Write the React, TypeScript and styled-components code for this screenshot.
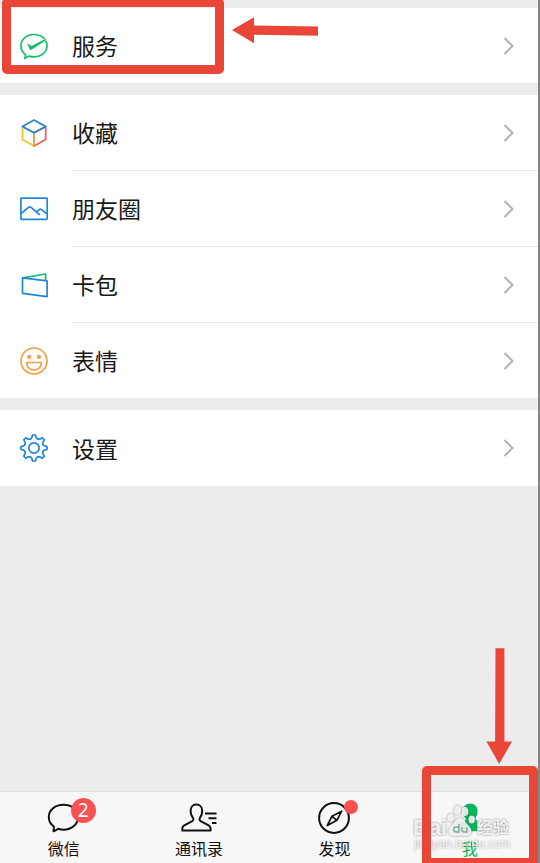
import React from "react";
import styled, { createGlobalStyle } from "styled-components";

const GlobalStyle = createGlobalStyle`
  * { box-sizing: border-box; }
  body {
    margin: 0;
    background: #ececec;
    font-family: "Noto Sans CJK SC", "Noto Sans", sans-serif;
    color: #191919;
  }
`;

const RED = "#ea4638";

const Screen = styled.div`
  position: relative;
  display: flex;
  flex-direction: column;
  width: 540px;
  height: 863px;
  padding-top: 8px;
  overflow: hidden;
  background: #ececec;
  border-right: 2px solid #858585;
`;

const Groups = styled.main`
  flex: 1;
  display: flex;
  flex-direction: column;
  gap: 12px;
`;

const Group = styled.section`
  background: #fff;
`;

const Row = styled.div<{ $height: number }>`
  display: flex;
  align-items: stretch;
  height: ${(p) => p.$height}px;
`;

const RowIcon = styled.div`
  flex: none;
  display: flex;
  align-items: center;
  width: 72px;
  padding-left: 19px;
`;

const RowBody = styled.div<{ $divider?: boolean }>`
  flex: 1;
  display: flex;
  align-items: center;
  justify-content: space-between;
  padding-right: 22px;
  border-bottom: ${(p) => (p.$divider ? "1px solid #e9e9e9" : "0")};
`;

const RowLabel = styled.span`
  font-size: 23px;
  line-height: 34px;
  padding-bottom: 1px;
`;

const TabBar = styled.nav`
  flex: none;
  display: grid;
  grid-template-columns: repeat(4, 135.4px);
  height: 72px;
  padding-top: 9px;
  background: #f7f7f7;
  border-top: 1px solid #dedede;
`;

const Tab = styled.div<{ $active?: boolean }>`
  display: flex;
  flex-direction: column;
  align-items: center;
  margin-left: -8px;
  color: ${(p) => (p.$active ? "#07b75b" : "#111")};
`;

const TabIcon = styled.div`
  position: relative;
  width: 38px;
  height: 34px;
`;

const TabLabel = styled.span`
  font-size: 16px;
  line-height: 24px;
  margin-top: 1px;
`;

const CountBadge = styled.span`
  position: absolute;
  left: 26px;
  top: -3px;
  width: 25px;
  height: 25px;
  border-radius: 50%;
  background: #fa5151;
  color: #fff;
  font: 19px/25px "Noto Sans", sans-serif;
  text-align: center;
`;

const DotBadge = styled.span`
  position: absolute;
  left: 29px;
  top: -1px;
  width: 14px;
  height: 14px;
  border-radius: 50%;
  background: #fa5151;
`;

const Highlight = styled.div<{ $x: number; $y: number; $w: number; $h: number }>`
  position: absolute;
  left: ${(p) => p.$x}px;
  top: ${(p) => p.$y}px;
  width: ${(p) => p.$w}px;
  height: ${(p) => p.$h}px;
  border: 9px solid ${RED};
  border-radius: 5px;
`;

const Arrow = styled.svg<{ $x: number; $y: number }>`
  position: absolute;
  left: ${(p) => p.$x}px;
  top: ${(p) => p.$y}px;
  fill: ${RED};
`;

const Watermark = styled.div`
  position: absolute;
  left: 413px;
  top: 800px;
  width: 112px;
  height: 56px;
  color: rgba(255, 255, 255, 0.85);
  filter: drop-shadow(0 0 1px rgba(70, 70, 70, 0.75));
`;

const MarkText = styled.span<{ $x: number; $y: number; $size: number; $bold?: boolean; $cjk?: boolean; $faint?: boolean }>`
  position: absolute;
  left: ${(p) => p.$x}px;
  top: ${(p) => p.$y}px;
  font-family: ${(p) => (p.$cjk ? '"Noto Sans CJK SC"' : '"Liberation Sans"')}, sans-serif;
  font-size: ${(p) => p.$size}px;
  font-weight: ${(p) => (p.$bold ? 700 : 400)};
  line-height: 1;
  white-space: nowrap;
  opacity: ${(p) => (p.$faint ? 0.7 : 1)};
`;

const Paw = styled.svg`
  position: absolute;
  left: 32px;
  top: 2px;
`;

const Chevron = () => (
  <svg width="14" height="20" viewBox="0 0 14 20" fill="none" stroke="#b2b2b2" strokeWidth="2">
    <path d="M2.500 2 10.500 10l-8 8" />
  </svg>
);

const lineIcon = { width: 30, height: 30, viewBox: "0 0 30 30", fill: "none", strokeWidth: 1.7 } as const;

const ServiceIcon = () => (
  <svg {...lineIcon} stroke="#16bf69">
    <path d="M25.600 7.800C23.300 5.200 19.500 3.500 15 3.500 7.600 3.500 1.900 8.500 1.900 14.800c0 3.700 1.800 6.800 4.700 8.900L6 27.200l4-2.100c1.600.5 3.200.8 5 .8 7.400 0 13-5 13-11.100 0-1.800-.5-3.500-1.200-5" />
    <path d="m8.200 12.200 4.200 2.700L26.800 7.800v1.600L12.500 18.700c-.9.600-1.500.3-1.900-.5Z" fill="#16bf69" stroke="none" />
  </svg>
);

const CubeIcon = () => (
  <svg {...lineIcon} strokeLinejoin="round">
    <path d="M3.500 8.700v12.800L15 28V14.700Z" stroke="#fac02f" />
    <path d="M26.700 8.700v12.800L15 28V14.700Z" stroke="#ef5a62" />
    <path d="M15 14.700V28" stroke="#f5a944" />
    <path d="M3.500 8.500 15 2l11.700 6.500L15 14.800Z" stroke="#1f87dd" />
  </svg>
);

const PhotoIcon = () => (
  <svg {...lineIcon} stroke="#1f87dd" strokeLinejoin="round">
    <rect x="1.900" y="4.200" width="26.300" height="21.200" rx=".6" />
    <path d="m2.200 19.500 7.600-6.300q1-.8 2 0l7.400 6.500q1 .9 1.900.6M17.700 17.800l2.500-2.100q1.200-1 2.400 0l5.400 4.300" />
  </svg>
);

const CardIcon = () => (
  <svg {...lineIcon} strokeLinejoin="round">
    <path d="m3.500 7.800 23.100-3.800v6.200" stroke="#16bf69" />
    <path d="m3.500 7.900 24.600 2.900v15.800L3.500 23.300Z" stroke="#1f87dd" />
  </svg>
);

const SmileIcon = () => (
  <svg {...lineIcon} stroke="#f4a047">
    <circle cx="15" cy="15" r="13" />
    <path d="M7.600 16.500h14.800c0 4.300-3 7.400-7.400 7.400s-7.400-3.100-7.400-7.400Z" strokeLinejoin="round" />
    <circle cx="10.100" cy="10.900" r="2.100" fill="#f4a047" stroke="none" />
    <circle cx="19.900" cy="10.900" r="2.100" fill="#f4a047" stroke="none" />
  </svg>
);

const GearIcon = () => (
  <svg {...lineIcon} stroke="#1f87dd" strokeLinecap="round" strokeLinejoin="round">
    <circle cx="15" cy="15" r="5.200" />
    {/* The outline repeats the same tooth every 45 degrees. */}
    {[0, 45, 90, 135, 180, 225, 270, 315].map((angle) => (
      <path
        key={angle}
        transform={`rotate(${angle} 15 15)`}
        d="M11.300 6.070Q12.700 5.500 13.100 3.800L13.500 2h3l.4 1.800q.4 1.700 1.800 2.270"
      />
    ))}
  </svg>
);

const tabIcon = {
  width: 38,
  height: 34,
  viewBox: "0 0 38 34",
  fill: "none",
  stroke: "currentColor",
  strokeWidth: 2,
  strokeLinejoin: "round",
} as const;

const ChatIcon = () => (
  <svg {...tabIcon}>
    <path d="M18.500 3.800C10.200 3.800 3.800 9.100 3.800 16c0 4.200 2 7.400 5.100 9.500l-.3 4.800 4.700-2.500c1.700.6 3.300.9 5.200.9 8.200 0 14.700-5.700 14.700-12.700S26.700 3.800 18.500 3.800Z" />
  </svg>
);

const ContactsIcon = () => (
  <svg {...tabIcon}>
    <path d="M16.300 3.600c-3.500 0-5.700 2.600-5.700 6.300 0 2.800 1 5.200 2.300 6.900.8 1.100.6 2.800-.6 3.400l-8 4.200c-1.300.7-2 1.700-2 3v2.100h28.300v-2.100c0-1.300-.7-2.300-2-3l-8-4.200c-1.200-.6-1.400-2.300-.6-3.400 1.300-1.700 2.200-4.100 2.200-6.900 0-3.700-2.300-6.300-5.900-6.300Z" />
    <path d="M25 12.500h11.500M28.500 17.300h8M32 22h4.500" />
  </svg>
);

const CompassIcon = () => (
  <svg {...tabIcon}>
    <circle cx="19" cy="17" r="14.900" />
    <path d="m26.600 10.200-4.700 9.100-9.600 5.200 4.600-9.200ZM16.900 15.300l5 4" strokeWidth="1.700" />
  </svg>
);

const MeIcon = () => (
  <svg {...tabIcon} fill="currentColor" stroke="none">
    <path d="M19.200 2.500c-4.400 0-7.300 3.200-7.300 7.500 0 3 1.200 5.500 2.600 7.300.7.900.4 1.900-.6 2.400L10 22c-1.900 1-2.700 2.500-2.700 4.500v3.800h19V19.500q-2.800-1-1.500-3.200c1.100-1.700 1.800-3.800 1.800-6.300 0-4.300-3-7.500-7.400-7.500Z" />
  </svg>
);

const groups = [
  [{ label: "服务", Icon: ServiceIcon, height: 75 }],
  [
    { label: "收藏", Icon: CubeIcon, height: 76 },
    { label: "朋友圈", Icon: PhotoIcon, height: 76 },
    { label: "卡包", Icon: CardIcon, height: 76 },
    { label: "表情", Icon: SmileIcon, height: 75 },
  ],
  [{ label: "设置", Icon: GearIcon, height: 76 }],
];

export default function App() {
  return (
    <>
      <GlobalStyle />
      <Screen>
        <Groups>
          {groups.map((rows, g) => (
            <Group key={g}>
              {rows.map(({ label, Icon, height }, i) => (
                <Row key={label} $height={height}>
                  <RowIcon><Icon /></RowIcon>
                  <RowBody $divider={i < rows.length - 1}>
                    <RowLabel>{label}</RowLabel>
                    <Chevron />
                  </RowBody>
                </Row>
              ))}
            </Group>
          ))}
        </Groups>
        <TabBar>
          <Tab>
            <TabIcon><ChatIcon /><CountBadge>2</CountBadge></TabIcon>
            <TabLabel>微信</TabLabel>
          </Tab>
          <Tab>
            <TabIcon><ContactsIcon /></TabIcon>
            <TabLabel>通讯录</TabLabel>
          </Tab>
          <Tab>
            <TabIcon><CompassIcon /><DotBadge /></TabIcon>
            <TabLabel>发现</TabLabel>
          </Tab>
          <Tab $active>
            <TabIcon><MeIcon /></TabIcon>
            <TabLabel>我</TabLabel>
          </Tab>
        </TabBar>

        <Watermark>
          <MarkText $x={0} $y={17} $size={22} $bold>Bai</MarkText>
          <Paw width="32" height="36" viewBox="0 0 32 36" fill="currentColor">
            <ellipse cx="5.700" cy="15.700" rx="3.200" ry="4" />
            <ellipse cx="12.500" cy="8" rx="3.500" ry="4.700" />
            <ellipse cx="20" cy="9.500" rx="3.300" ry="4.500" />
            <ellipse cx="26.700" cy="17.500" rx="3.200" ry="4" />
            <path d="M15 16c-4 0-5 4-8 7-6 5-4 12 3 11 3-.5 6-.5 9 0 8 1 10-6 4-11-3-3-4-7-8-7Z" />
            <path d="M14 22v8h-2.500q-3 0-3-2.500T11 25h3M17 25v3q0 2 2 2h3v-5" fill="none" stroke="#79aa90" strokeWidth="1.300" />
          </Paw>
          <MarkText $x={64} $y={18} $size={16} $bold $cjk>经验</MarkText>
          <MarkText $x={1} $y={38} $size={12} $faint>jingyan.baidu.com</MarkText>
        </Watermark>

        <Highlight $x={2} $y={-2} $w={222} $h={76} />
        <Highlight $x={422} $y={766} $w={116} $h={101} />
        <Arrow $x={230} $y={16} width="90" height="28" viewBox="0 0 90 28">
          <path d="M2 14 24 1.300V9.600L88 10.500v9.200L24 18.700V27.200Z" />
        </Arrow>
        <Arrow $x={485} $y={647} width="28" height="118" viewBox="0 0 28 118">
          <path d="M10.500 1.300h8.900V94.500H27L14.200 117 1.500 94.500h8.600Z" />
        </Arrow>
      </Screen>
    </>
  );
}
